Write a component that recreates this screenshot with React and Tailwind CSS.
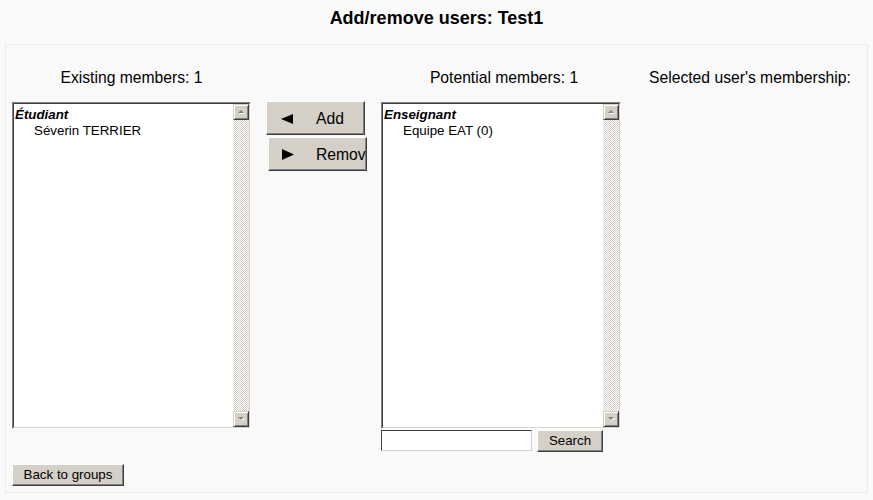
import React from "react";

const bevel =
  "border border-t-[#d4d0c8] border-l-[#d4d0c8] border-r-[#404040] border-b-[#404040] shadow-[inset_1px_1px_#ffffff,inset_-1px_-1px_#808080] bg-[#d4d0c8]";

const btn =
  "bg-[#d4d0c8] border border-t-[#ffffff] border-l-[#ffffff] border-r-[#404040] border-b-[#404040] shadow-[inset_-1px_-1px_#808080]";

function ScrollArrow({ up }) {
  return (
    <div className={`h-[16px] w-[16px] flex items-center justify-center ${bevel}`}>
      <svg width="9" height="6" viewBox="0 0 9 6">
        {up ? (
          <>
            <polygon points="2,5 5,2 8,5" fill="#ffffff" />
            <polygon points="1,4 4,1 7,4" fill="#808080" />
          </>
        ) : (
          <>
            <polygon points="2,2 8,2 5,5" fill="#ffffff" />
            <polygon points="1,1 7,1 4,4" fill="#808080" />
          </>
        )}
      </svg>
    </div>
  );
}

function Listbox({ header, item, width }) {
  return (
    <div
      className={`${width} h-[327px] border border-t-[#808080] border-l-[#808080] border-r-[#ffffff] border-b-[#ffffff]`}
    >
      <div className="h-full w-full flex border border-t-[#404040] border-l-[#404040] border-r-[#d4d0c8] border-b-[#d4d0c8]">
        <div className="flex-1 bg-white text-[13.33px] leading-[16px] pl-[1px] pt-[3px]">
          <div className="font-bold italic">{header}</div>
          <div className="pl-[19px]">{item}</div>
        </div>
        <div className="w-[16px] flex flex-col">
          <ScrollArrow up />
          <div className="flex-1 bg-[repeating-conic-gradient(#d4d0c8_0_25%,#ffffff_0_50%)] bg-[length:2px_2px]" />
          <ScrollArrow />
        </div>
      </div>
    </div>
  );
}

export default function App() {
  return (
    <div className="w-[873px] h-[500px] bg-[#fafafa] font-['Liberation_Sans',Arial,sans-serif] text-black overflow-hidden">
      <h1 className="h-[44px] pt-[8px] text-center text-[18px] font-bold leading-[21px]">
        Add/remove users: Test1
      </h1>
      <div className="mx-[5px] h-[449px] border border-[#ececec] bg-[#f9f9f9] px-[6px]">
        <div className="flex">
          <div className="w-[239px] flex flex-col">
            <div className="h-[57px] pt-[24px] text-center text-[15.7px] leading-[18px]">
              Existing members: 1
            </div>
            <Listbox width="w-[239px]" header="Étudiant" item="Séverin TERRIER" />
          </div>

          <div className="ml-[15px] pt-[56px] flex flex-col w-[101px]">
            <div className={`w-[99px] h-[34px] flex items-center pt-[1px] ${btn}`}>
              <svg className="ml-[14px]" width="12" height="10" viewBox="0 0 12 10">
                <polygon points="0,5 12,0 12,10" fill="#000" />
              </svg>
              <span className="ml-[23px] text-[15.7px] leading-[18px]">Add</span>
            </div>
            <div className={`mt-[2px] ml-[2px] w-[99px] h-[34px] flex items-center pt-[1px] overflow-hidden whitespace-nowrap ${btn}`}>
              <svg className="ml-[13px] shrink-0" width="12" height="11" viewBox="0 0 12 11">
                <polygon points="0,0 12,5.5 0,11" fill="#000" />
              </svg>
              <span className="ml-[22px] text-[15.7px] leading-[18px]">Remove</span>
            </div>
          </div>

          <div className="ml-[14px] w-[240px] flex flex-col">
            <div className="h-[57px] pt-[24px] text-center text-[15.7px] leading-[18px] pl-[6px]">
              Potential members: 1
            </div>
            <Listbox width="w-[240px]" header="Enseignant" item="Equipe EAT (0)" />
            <div className="mt-[1px] flex items-start">
              <div className="w-[151px] h-[21px] bg-white border border-t-[#404040] border-l-[#404040] border-r-[#d4d0c8] border-b-[#d4d0c8]" />
              <div className={`ml-[5px] w-[66px] h-[22px] flex items-center justify-center text-[13.33px] ${btn}`}>
                Search
              </div>
            </div>
          </div>

          <div className="ml-[28px] pt-[24px] text-[15.7px] leading-[18px] whitespace-nowrap">
            Selected user's membership:
          </div>
        </div>

        <div className={`mt-[12px] w-[112px] h-[22px] flex items-center justify-center text-[13.33px] ${btn}`}>
          Back to groups
        </div>
      </div>
    </div>
  );
}
